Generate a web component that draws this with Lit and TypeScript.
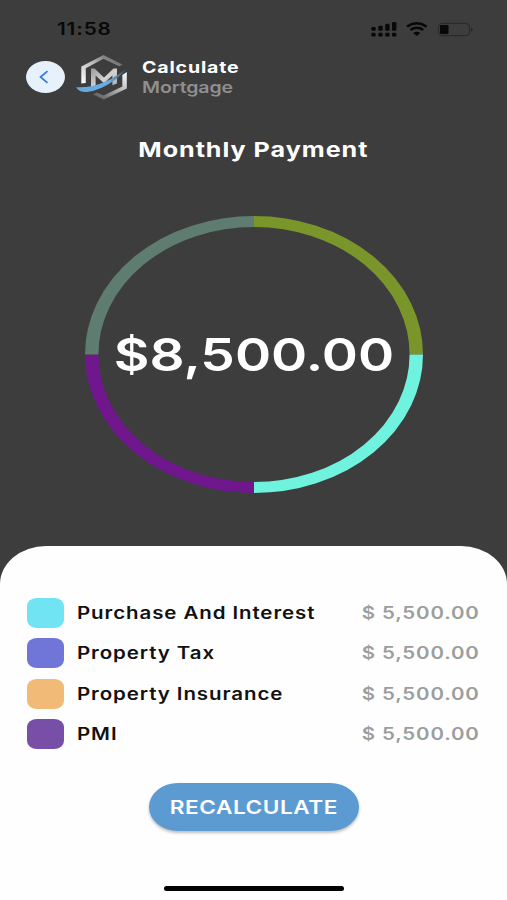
import { LitElement, html, css, svg } from "lit";
import { customElement, property } from "lit/decorators.js";
import { styleMap } from "lit/directives/style-map.js";

interface Item {
  label: string;
  amount: string;
  color: string;
}

const ITEMS: Item[] = [
  { label: "Purchase And Interest", amount: "$ 5,500.00", color: "#70e4f3" },
  { label: "Property Tax", amount: "$ 5,500.00", color: "#7076d8" },
  { label: "Property Insurance", amount: "$ 5,500.00", color: "#f2ba77" },
  { label: "PMI", amount: "$ 5,500.00", color: "#784fa7" },
];

const ARCS = [
  { d: "M138.5 5.5A133 133 0 0 1 271.5 138.5", color: "#7a962b" },
  { d: "M271.5 138.5A133 133 0 0 1 138.5 271.5", color: "#70f3de" },
  { d: "M138.5 271.5A133 133 0 0 1 5.5 138.5", color: "#70178e" },
  { d: "M5.5 138.5A133 133 0 0 1 138.5 5.5", color: "#5f7c70" },
];

@customElement("status-bar")
export class StatusBar extends LitElement {
  static styles = css`
    :host {
      display: flex;
      align-items: center;
      height: 54px;
      padding: 3px 34px 0 57px;
      box-sizing: border-box;
      color: #080808;
    }
    .time {
      flex: 1;
      font-size: 17px;
      font-weight: 600;
      letter-spacing: 0.7px;
      transform: scaleX(1.22);
      transform-origin: left;
      white-space: nowrap;
    }
    svg {
      display: block;
    }
  `;
  render() {
    return html`
      <div class="time">11:58</div>
      <svg width="103" height="20" viewBox="370 18 103 20">
        <g fill="#080808">
          <rect x="371.3" y="26" width="4.4" height="3.8" rx="1.2" />
          <rect x="378.3" y="24.7" width="4.4" height="5.1" rx="1.2" />
          <rect x="385.2" y="22.7" width="4.4" height="7.1" rx="1.2" />
          <rect x="392" y="21" width="4.4" height="8.8" rx="1.2" />
          <rect x="371.3" y="31.8" width="4.4" height="3.6" rx="1.2" />
          <rect x="378.3" y="31.8" width="4.4" height="3.6" rx="1.2" />
          <rect x="385.2" y="31.8" width="4.4" height="3.6" rx="1.2" />
          <rect x="392" y="31.8" width="4.4" height="3.6" rx="1.2" />
          <path d="M413.2 31.9Q416.8 29.7 420.4 31.9L416.8 35Z" />
          <rect x="440" y="24" width="8.5" height="9" rx="1.3" />
          <path d="M471.2 26.8Q474 28.6 471.2 30.4Z" fill="#222" />
        </g>
        <g fill="none" stroke="#080808" stroke-width="2.5">
          <path d="M407 25.6Q416.8 19.1 426.6 25.6" />
          <path d="M410.4 29Q416.8 24.6 423.2 29" />
        </g>
        <rect x="438.4" y="22.3" width="31.2" height="12.4" rx="4" fill="none" stroke="#272727" />
      </svg>
    `;
  }
}

@customElement("payment-ring")
export class PaymentRing extends LitElement {
  @property() amount = "";
  static styles = css`
    :host {
      display: grid;
      place-items: center;
      width: 338px;
      height: 277px;
    }
    svg,
    .amount {
      grid-area: 1 / 1;
    }
    .amount {
      font-size: 45px;
      line-height: 56px;
      font-weight: 600;
      color: #fff;
      white-space: nowrap;
      transform: scaleX(1.22);
    }
  `;
  render() {
    return html`
      <svg width="338" height="277" viewBox="0 0 277 277" preserveAspectRatio="none">
        ${ARCS.map(
          (a) => svg`<path d=${a.d} fill="none" stroke=${a.color} stroke-width="11" />`
        )}
      </svg>
      <div class="amount">${this.amount}</div>
    `;
  }
}

@customElement("app-root")
export class AppRoot extends LitElement {
  static styles = css`
    :host {
      display: flex;
      flex-direction: column;
      height: 900px;
      overflow: hidden;
      background: #3d3d3d;
      font-family: Inter, "Liberation Sans", sans-serif;
    }
    .header {
      display: flex;
      align-items: center;
      height: 46px;
      padding-left: 25.5px;
    }
    .back {
      display: grid;
      place-items: center;
      width: 39px;
      height: 32px;
      padding: 0;
      border: 0;
      border-radius: 50%;
      background: #e6f1fb;
    }
    .back svg {
      margin-right: 3px;
    }
    .logo {
      display: block;
      margin-left: 11.5px;
    }
    .names {
      margin-left: 13px;
      font-size: 16px;
      line-height: 20px;
      font-weight: 600;
      letter-spacing: -0.1px;
      color: #8f8f8f;
      transform: scaleX(1.22);
      transform-origin: left;
      white-space: nowrap;
    }
    .names .main {
      color: #fff;
      font-weight: 700;
      letter-spacing: 0.7px;
    }
    h1 {
      align-self: center;
      margin: 36px 0 0;
      font-size: 20.6px;
      line-height: 28px;
      font-weight: 700;
      letter-spacing: 0.8px;
      color: #fff;
      transform: scaleX(1.22);
      white-space: nowrap;
    }
    payment-ring {
      align-self: center;
      margin-top: 52px;
    }
    .sheet {
      flex: 1;
      display: flex;
      flex-direction: column;
      margin-top: 53px;
      padding: 51.5px 27px 0 26.5px;
      border-radius: 46px 46px 0 0 / 38px 38px 0 0;
      background: #fefefe;
    }
    .list {
      display: grid;
      gap: 10.5px;
    }
    .row {
      display: flex;
      align-items: center;
      height: 30px;
      font-size: 16.8px;
      line-height: 20px;
      font-weight: 600;
      letter-spacing: 0.75px;
      color: #111;
      white-space: nowrap;
    }
    .swatch {
      width: 37px;
      height: 30px;
      border-radius: 10px / 8px;
    }
    .label {
      flex: 1;
      margin-left: 13.3px;
      transform: scaleX(1.22);
      transform-origin: left;
    }
    .value {
      color: #9c9e9e;
      letter-spacing: 0.7px;
      transform: scaleX(1.22);
      transform-origin: right;
    }
    .action {
      align-self: center;
      width: 210px;
      height: 48px;
      margin-top: 33.5px;
      padding: 0;
      border: 0;
      border-radius: 29px / 24px;
      background: #5b9bd2;
      box-shadow: 0 2px 3px rgba(0, 0, 0, 0.25);
      color: #fff;
      font: 600 18.5px/48px Inter, "Liberation Sans", sans-serif;
      letter-spacing: 0.45px;
    }
    .action span {
      display: inline-block;
      transform: scaleX(1.22);
    }
    .home {
      align-self: center;
      width: 180px;
      height: 5px;
      margin-top: 55.5px;
      border-radius: 3px;
      background: #000;
    }
    .action,
    .home {
      margin-left: 1.5px;
    }
  `;
  render() {
    return html`
      <status-bar></status-bar>
      <div class="header">
        <button class="back" aria-label="Back">
          <svg width="12" height="14" viewBox="0 0 12 14">
            <path d="M9.5 1.2L2.5 7L9.5 12.8" fill="none" stroke="#3478e0" stroke-width="1.7" />
          </svg>
        </button>
        <svg class="logo" width="53" height="46" viewBox="76 53 53 46">
          <defs>
            <linearGradient id="a" x1="0" y1="1" x2="1" y2="0">
              <stop offset="0" stop-color="#fff" />
              <stop offset="0.5" stop-color="#bbb" />
              <stop offset="1" stop-color="#484848" />
            </linearGradient>
            <linearGradient id="b" x1="0" y1="1" x2="1" y2="0">
              <stop offset="0" stop-color="#505050" />
              <stop offset="0.6" stop-color="#bbb" />
              <stop offset="1" stop-color="#fff" />
            </linearGradient>
            <linearGradient id="c" x1="0" y1="0" x2="1" y2="1">
              <stop offset="0" stop-color="#999" />
              <stop offset="0.55" stop-color="#d2d2d2" />
              <stop offset="1" stop-color="#aaa" />
            </linearGradient>
            <linearGradient id="d" x1="0" y1="0" x2="1" y2="0">
              <stop offset="0" stop-color="#5fa7e0" />
              <stop offset="0.65" stop-color="#6aaee2" />
              <stop offset="1" stop-color="#444" />
            </linearGradient>
          </defs>
          <path d="M81.3 82.5V65.6L103.5 54L122.5 63.4L119.2 65.3L103.5 57.8L85.8 67.2V82Z" fill="url(#a)" />
          <path d="M126.8 71V87.5L103.7 98.5L93 93.4L96.6 91.5L103.7 94.6L122.3 85.5V74Z" fill="url(#b)" />
          <path d="M91 85.5V67.5H94.5L104 76.5L113.5 67.5H117V82.5L112.4 84.2V74.5L104 82.2L95.6 74.5V84.7Z" fill="url(#c)" />
          <path d="M76 86.3C96 87.2 112 79 127 67.2C116 81 100 89 88.5 90.8C83 91.5 79 90.6 76 86.3Z" fill="url(#d)" />
        </svg>
        <div class="names">
          <div class="main">Calculate</div>
          <div>Mortgage</div>
        </div>
      </div>
      <h1>Monthly Payment</h1>
      <payment-ring amount="$8,500.00"></payment-ring>
      <div class="sheet">
        <div class="list">
          ${ITEMS.map(
            (i) => html`<div class="row">
              <div class="swatch" style=${styleMap({ background: i.color })}></div>
              <div class="label">${i.label}</div>
              <div class="value">${i.amount}</div>
            </div>`
          )}
        </div>
        <button class="action"><span>RECALCULATE</span></button>
        <div class="home"></div>
      </div>
    `;
  }
}
